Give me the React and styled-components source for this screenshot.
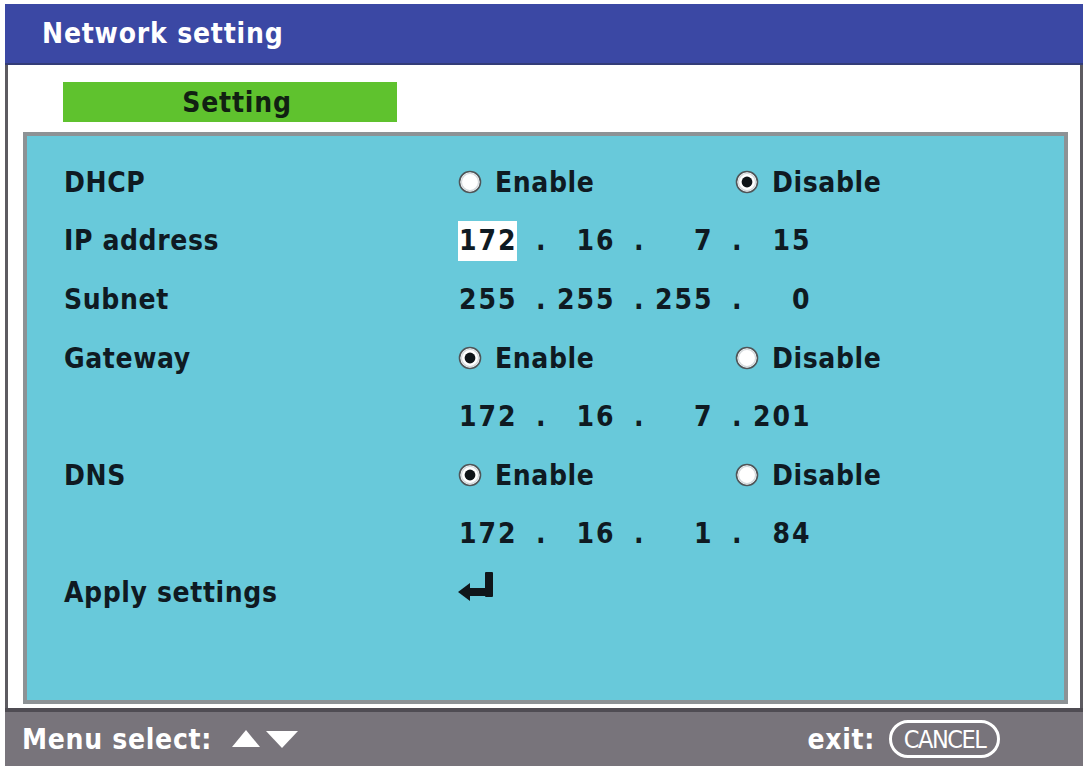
import React from 'react'
import styled, { createGlobalStyle } from 'styled-components'

const GlobalStyle = createGlobalStyle`
  html, body {
    margin: 0;
    padding: 0;
    background: #ffffff;
  }
  body {
    font-family: "DejaVu Sans Condensed", "DejaVu Sans", "Liberation Sans", sans-serif;
    font-stretch: condensed;
    font-weight: bold;
    color: #0f1a22;
  }
`

const Window = styled('div')`
  margin: 4px 0 0 5px;
  width: 1078px;
  height: 762px;
  display: flex;
  flex-direction: column;
`

const TitleBar = styled('header')`
  height: 59px;
  flex: none;
  display: flex;
  align-items: center;
  padding-left: 37px;
  background: #3b48a4;
  border-bottom: 2px solid #333c78;
  color: #ffffff;
  font-size: 28px;
  letter-spacing: 0.8px;
`

const Body = styled('main')`
  flex: 1;
  display: flex;
  flex-direction: column;
  padding: 17px 12px 4px 15px;
  background: #ffffff;
  border-left: 3px solid #5d5b61;
  border-right: 3px solid #5d5b61;
`

const Tab = styled('div')`
  width: 334px;
  height: 40px;
  margin-left: 40px;
  padding-left: 14px;
  box-sizing: border-box;
  display: flex;
  align-items: center;
  justify-content: center;
  background: #5fc22e;
  color: #112012;
  font-size: 28px;
  letter-spacing: 0.8px;
`

const Panel = styled('section')`
  flex: 1;
  margin-top: 10px;
  padding: 17px 0 0 36px;
  background: #68c9da;
  border: 4px solid #8d9295;
  display: grid;
  grid-template-columns: 395px 277px 1fr;
  grid-auto-rows: 58.6px;
  align-content: start;
  align-items: center;
  font-size: 28px;
  letter-spacing: 0.6px;
`

const Label = styled('div')`
  grid-column: 1;
  padding-left: 1px;
`

const Option = styled('label')`
  display: flex;
  align-items: center;
  gap: 13px;
`

const Radio = ({ checked }) => (
  <svg width="24" height="24" viewBox="0 0 24 24">
    <circle cx="12" cy="12" r="10.5" fill="#ffffff" stroke="#4f5558" strokeWidth="1.6" />
    <circle cx="12" cy="12" r="8.6" fill="none" stroke="#d4d9dc" strokeWidth="1.3" />
    {checked && <circle cx="12" cy="12" r="5.4" fill="#0f1418" />}
  </svg>
)

const IpRow = styled('div')`
  grid-column: 2 / -1;
  display: flex;
  align-items: center;
`

const Octet = styled('div')`
  width: 59px;
  height: 40px;
  display: grid;
  grid-template-columns: repeat(3, 19.5px);
  align-items: center;
  background: ${(p) => (p.$selected ? '#ffffff' : 'transparent')};
`

const Digit = styled('span')`
  text-align: center;
  letter-spacing: 0;
`

const Dot = styled('span')`
  width: 39px;
  padding-left: 19px;
  box-sizing: border-box;
`

const IpAddress = ({ value, selected }) => (
  <IpRow>
    {value.map((n, i) => {
      const chars = String(n).padStart(3, ' ').split('')
      return (
        <React.Fragment key={i}>
          {i > 0 && <Dot>.</Dot>}
          <Octet $selected={selected === i}>
            {chars.map((c, j) => (
              <Digit key={j}>{c === ' ' ? '\u00a0' : c}</Digit>
            ))}
          </Octet>
        </React.Fragment>
      )
    })}
  </IpRow>
)

const ReturnIcon = () => (
  <svg width="36" height="30" viewBox="0 0 36 30" style={{ marginTop: -6 }}>
    <rect x="27" y="0" width="8" height="25" rx="1" fill="#10161a" />
    <rect x="9" y="16" width="26" height="8" rx="1" fill="#10161a" />
    <polygon points="0,20 12,11 12,29" fill="#10161a" />
  </svg>
)

const Footer = styled('footer')`
  height: 54px;
  flex: none;
  display: flex;
  align-items: center;
  justify-content: space-between;
  padding: 0 83px 0 17px;
  background: #78747b;
  border-top: 4px solid #4f4c53;
  color: #ffffff;
  font-size: 28px;
  letter-spacing: 0.7px;
`

const FooterGroup = styled('div')`
  display: flex;
  align-items: center;
  gap: ${(p) => p.$gap || 14}px;
`

const Arrows = () => (
  <svg width="66" height="18" viewBox="0 0 66 18">
    <polygon points="0,17 14,0 28,17" fill="#ffffff" />
    <polygon points="34,1 66,1 50,18" fill="#ffffff" />
  </svg>
)

const CancelKey = styled('span')`
  width: 111px;
  height: 38px;
  box-sizing: border-box;
  display: flex;
  align-items: center;
  justify-content: center;
  border: 3px solid #ffffff;
  border-radius: 19px;
  font-size: 25px;
  font-weight: normal;
  letter-spacing: -1.5px;
`

export default function App() {
  return (
    <>
      <GlobalStyle />
      <Window>
        <TitleBar>Network setting</TitleBar>
        <Body>
          <Tab>Setting</Tab>
          <Panel>
            <Label>DHCP</Label>
            <Option>
              <Radio /> Enable
            </Option>
            <Option>
              <Radio checked /> Disable
            </Option>

            <Label>IP address</Label>
            <IpAddress value={[172, 16, 7, 15]} selected={0} />

            <Label>Subnet</Label>
            <IpAddress value={[255, 255, 255, 0]} />

            <Label>Gateway</Label>
            <Option>
              <Radio checked /> Enable
            </Option>
            <Option>
              <Radio /> Disable
            </Option>

            <Label />
            <IpAddress value={[172, 16, 7, 201]} />

            <Label>DNS</Label>
            <Option>
              <Radio checked /> Enable
            </Option>
            <Option>
              <Radio /> Disable
            </Option>

            <Label />
            <IpAddress value={[172, 16, 1, 84]} />

            <Label>Apply settings</Label>
            <div>
              <ReturnIcon />
            </div>
          </Panel>
        </Body>
        <Footer>
          <FooterGroup $gap={20}>
            <span>Menu select:</span>
            <Arrows />
          </FooterGroup>
          <FooterGroup>
            <span>exit:</span>
            <CancelKey>CANCEL</CancelKey>
          </FooterGroup>
        </Footer>
      </Window>
    </>
  )
}
